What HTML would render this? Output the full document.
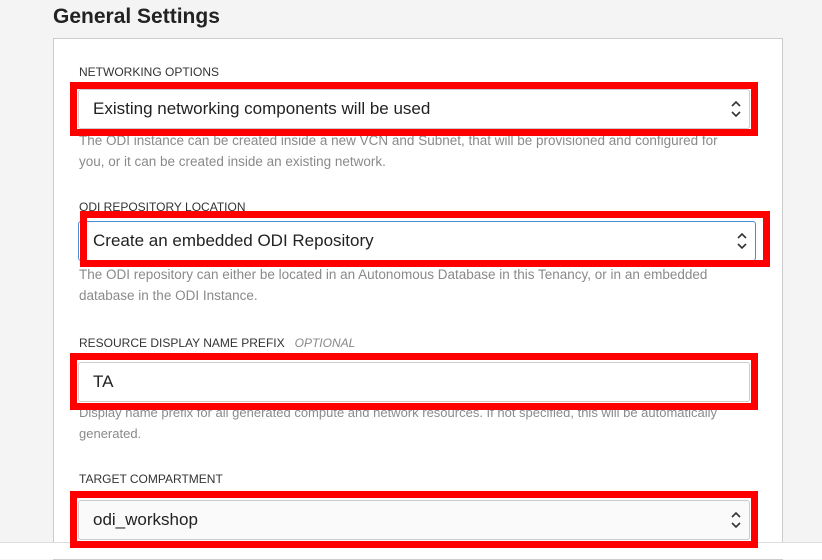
<!DOCTYPE html>
<html><head><style>
body{margin:0;width:822px;height:558px;background:#f4f4f4;font-family:"Liberation Sans",sans-serif;position:relative;overflow:hidden}
.a{position:absolute}
h1{position:absolute;left:53px;top:5px;margin:0;font-size:21px;font-weight:bold;color:#222}
.panel{position:absolute;left:53px;top:38px;width:728px;height:520px;background:#fff;border:1px solid #ccc}
.lbl{position:absolute;left:79px;font-size:12px;color:#333;white-space:nowrap}
.help{position:absolute;left:79px;font-size:13px;color:#8a8a8a;line-height:21px;width:660px;white-space:nowrap}
.inp{position:absolute;left:78px;width:672px;height:40px;background:#fff;border:1px solid #ccc;border-radius:3px;box-sizing:border-box;font-size:17px;color:#222;line-height:38px;padding-left:14px}
.red{position:absolute;border:7px solid #f00;box-sizing:border-box}
.ar{position:absolute;right:8px;top:9px;width:10px;height:20px}
</style></head><body>
<h1>General Settings</h1>
<div class="panel"></div>
<div class="a" style="left:0;top:542px;width:822px;height:16px;background:#fff;border-top:1px solid #ddd"></div>

<div class="lbl" style="top:65px">NETWORKING OPTIONS</div>
<div class="inp" style="top:89px">Existing networking components will be used<svg class="ar" viewBox="0 0 10 20"><path d="M1 7l4-4 4 4M1 13l4 4 4-4" fill="none" stroke="#333" stroke-width="1.6"/></svg></div>
<div class="help" style="top:130px;font-size:13.5px">The ODI instance can be created inside a new VCN and Subnet, that will be provisioned and configured for<br>you, or it can be created inside an existing network.</div>
<div class="red" style="left:70px;top:82px;width:688px;height:54px"></div>

<div class="lbl" style="top:200px">ODI REPOSITORY LOCATION</div>
<div class="inp" style="top:221px;width:678px;border:1px solid #4a90d9">Create an embedded ODI Repository<svg class="ar" viewBox="0 0 10 20"><path d="M1 7l4-4 4 4M1 13l4 4 4-4" fill="none" stroke="#333" stroke-width="1.6"/></svg></div>
<div class="help" style="top:264px;font-size:13.5px">The ODI repository can either be located in an Autonomous Database in this Tenancy, or in an embedded<br>database in the ODI Instance.</div>
<div class="red" style="left:80px;top:211px;width:690px;height:56px"></div>

<div class="lbl" style="top:336px">RESOURCE DISPLAY NAME PREFIX &nbsp;&nbsp;<i style="color:#888">OPTIONAL</i></div>
<div class="inp" style="top:362px">TA</div>
<div class="help" style="top:402px">Display name prefix for all generated compute and network resources. If not specified, this will be automatically<br>generated.</div>
<div class="red" style="left:70px;top:353px;width:688px;height:57px"></div>

<div class="lbl" style="top:472px">TARGET COMPARTMENT</div>
<div class="inp" style="top:500px;background:#fafafa">odi_workshop<svg class="ar" viewBox="0 0 10 20"><path d="M1 7l4-4 4 4M1 13l4 4 4-4" fill="none" stroke="#333" stroke-width="1.6"/></svg></div>
<div class="red" style="left:70px;top:491px;width:688px;height:57px"></div>
</body></html>
